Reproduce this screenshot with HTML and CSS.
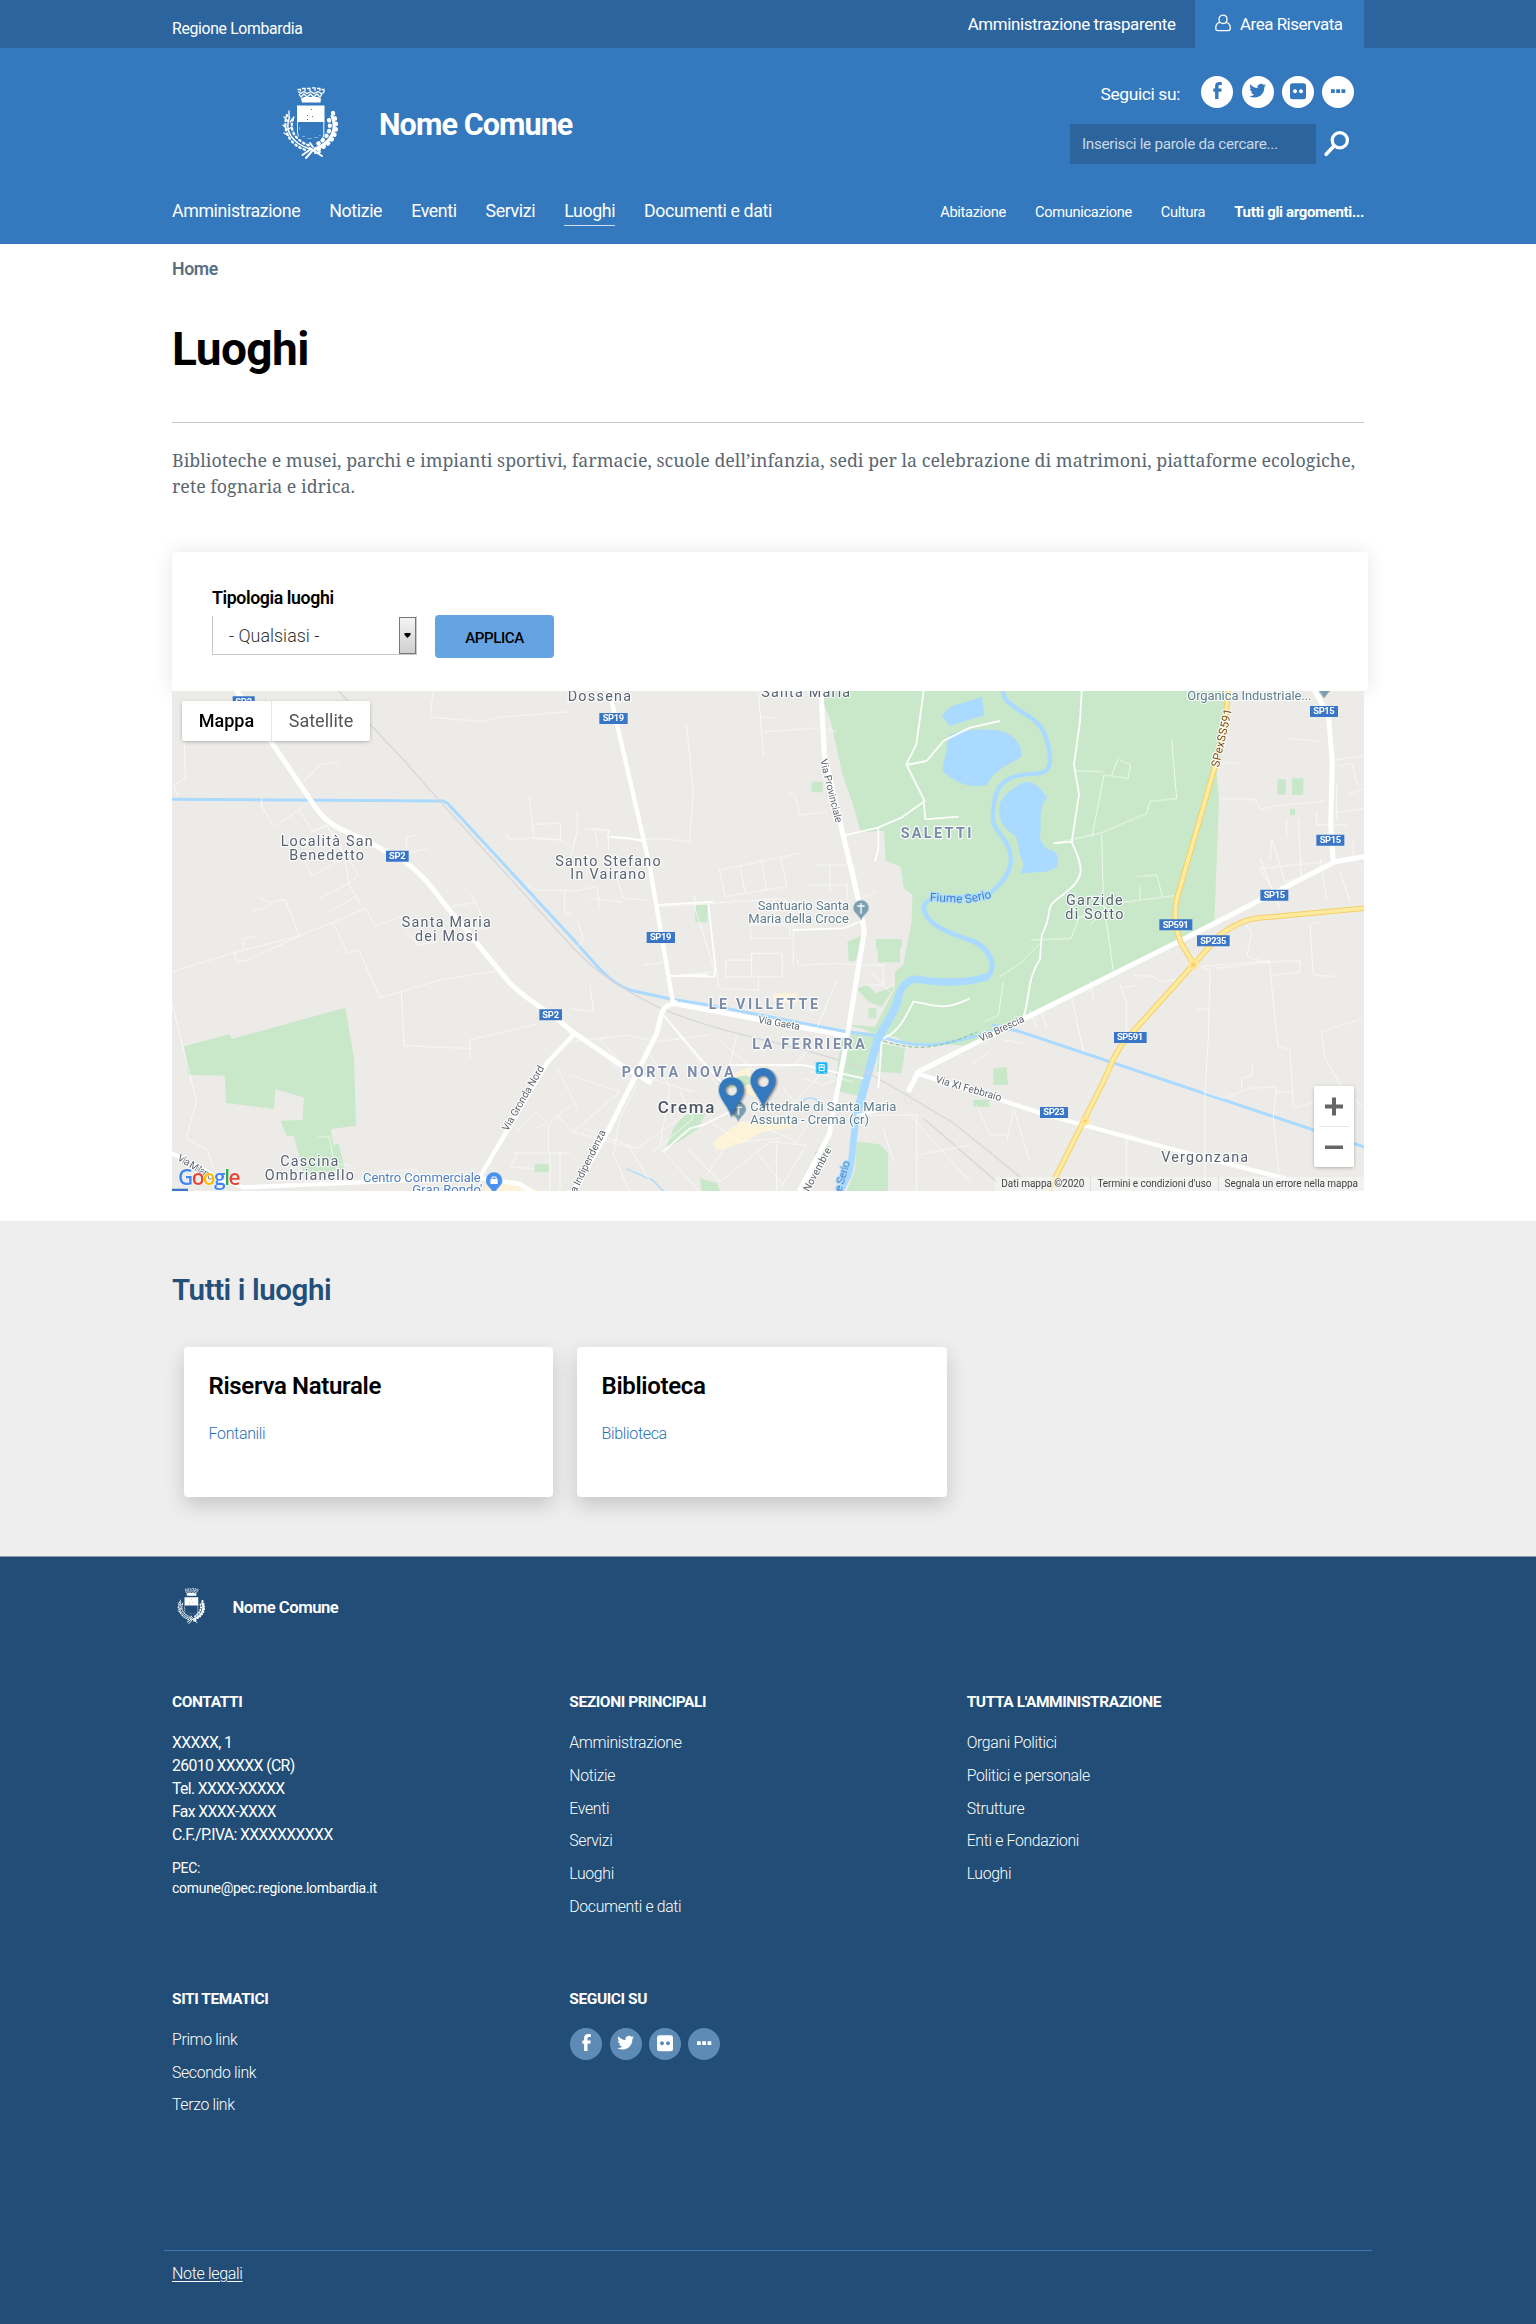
FILE: index.html
```html
<!DOCTYPE html>
<html lang="it">
<head>
<meta charset="utf-8">
<title>Luoghi - Nome Comune</title>
<link rel="stylesheet" href="styles.css">
</head>
<body>
<svg width="0" height="0" class="defs">
  <defs>
    <symbol id="stemma" viewBox="0 0 58 72">
      <g fill="#fff">
        <path d="M19 11.500l3-1.500h14l3 1.500-.5 4H20z"/>
        <path d="M15 18.500h27.500v16.500H15z"/>
        <path d="M41.300 34h1v14l-1.500 4-.5-1 1-3zM15 35h.8v9l1 6-1-1-.8-5z"/>
      </g>
      <path fill="none" stroke="#fff" stroke-width="1.300" d="M15.500 2.500h3v2M20 1.500h3v2.500M25 1.500h3v2.500M30 .8h3v3.200M35 1.500h3v2.500M39.500 2.500h2.500v3M16 4.500l3 2 3-2 3 2 4-2 3 2 4-2 3 2 3-1M17 7l2 3 3-3 3 3 3.500-3 3 3 3.500-3 3 3 2-3"/>
      <g fill="currentColor">
        <path d="M29 22h1v1h-1zM25 28h1v1h-1zM30 29h1v1h-1zM25 32h1v1h-1z"/>
      </g>
      <g fill="none" stroke="#fff" stroke-linecap="round">
        <path stroke-width="1.500" d="M7.500 30C2.500 43 9 56 28 62"/>
        <path stroke-width="2.300" stroke-dasharray="1.500 3.200" d="M5 28C0 43 7 58 25 63.500M11 32C7 43 13 53 27 58.500"/>
        <path stroke-width="1.300" d="M7 24v6M2 30l4 4M12 30l-4 5M1 38l4 4M10 40l-5 3M2 46l5 3"/>
        <path stroke-width="3" d="M50 29C56 43 49 56 33 62"/>
        <path stroke-width="4.200" stroke-dasharray=".5 5" d="M51 26C59 44 51 57 34 63.500M47 33C50 43 45 52 33 58.500"/>
        <path stroke-width="2" d="M29 62l-8.500 6M28 61l12 8M31 63l-7 8M31 60l-3-4M33 66l5-1"/>
      </g>
      <path fill="#fff" opacity=".35" d="M20 49h3v1h-3zM25 51h5v1h-5zM32 50h4v1h-4zM17 40h1v3h-1zM37 48h2v1h-2z"/>
    </symbol>
    <symbol id="ico-fb" viewBox="0 0 32 32"><path fill="currentColor" d="M20.8 6.2v2.900h-1.700c-1.300 0-1.600.6-1.600 1.500v1.900h3.200l-.4 3.200h-2.800v7.300h-3.400v-7.300h-1.800v-3.200h1.800V10c0-2.500 1.600-3.900 4.100-3.900 1.100 0 2.200.1 2.200.1z"/></symbol>
    <symbol id="ico-tw" viewBox="0 0 32 32"><path fill="currentColor" d="M24 9.200c-.6.3-1.200.5-1.900.6.7-.4 1.200-1.100 1.500-1.800-.7.4-1.400.7-2.200.8a3.500 3.500 0 0 0-5.900 3.200c-2.900-.1-5.400-1.500-7.100-3.700-.9 1.600-.4 3.600 1.100 4.600-.6 0-1.100-.2-1.600-.4 0 1.700 1.200 3.100 2.800 3.400-.5.1-1 .2-1.600.1.5 1.400 1.700 2.400 3.200 2.400a6.900 6.900 0 0 1-5.100 1.500 9.800 9.800 0 0 0 15.100-8.700c.7-.5 1.300-1.200 1.700-2z"/></symbol>
    <symbol id="ico-fl" viewBox="0 0 32 32"><path fill="currentColor" fill-rule="evenodd" d="M10.500 7.200h11a2.500 2.500 0 0 1 2.500 2.500v11a2.500 2.500 0 0 1-2.500 2.500h-11A2.500 2.500 0 0 1 8 20.700v-11a2.500 2.500 0 0 1 2.500-2.500zM13 13.200a2 2 0 1 0 .01 0zM19 13.200a2 2 0 1 0 .01 0z"/></symbol>
    <symbol id="ico-more" viewBox="0 0 32 32"><path fill="currentColor" d="M9 13.200h3.800v3.800H9zM14.200 13.200H18v3.800h-3.800zM19.500 13.200h3.800v3.800h-3.800z"/></symbol>
  </defs>
</svg>

<header>
  <div class="topbar">
    <div class="container topbar-row">
      <a class="region">Regione Lombardia</a>
      <div class="topbar-right">
        <a class="trasp">Amministrazione trasparente</a>
        <a class="area">
          <svg width="16" height="18" viewBox="0 0 16 18" fill="none" stroke="#fff" stroke-width="1.300"><path d="M8 1.200c2.700 0 4 2 4 4.300s-1.700 4-4 4-4-1.700-4-4 1.300-4.300 4-4.300zM4.700 8.400C2.300 9 .9 10.700.8 13.200v1.400c0 1.300.7 2 1.900 2h10.600c1.200 0 1.900-.7 1.900-2v-1.400c-.1-2.500-1.500-4.200-3.900-4.800"/></svg>
          <span>Area Riservata</span>
        </a>
      </div>
    </div>
  </div>
  <div class="masthead">
    <div class="container">
      <div class="masthead-row">
        <div class="brand">
          <svg width="58" height="72"><use href="#stemma"/></svg>
          <span class="brand-name">Nome Comune</span>
        </div>
        <div class="tools">
          <div class="follow">
            <span class="follow-label">Seguici su:</span>
            <a class="dot first"><svg width="32" height="32"><use href="#ico-fb"/></svg></a>
            <a class="dot"><svg width="32" height="32"><use href="#ico-tw"/></svg></a>
            <a class="dot"><svg width="32" height="32"><use href="#ico-fl"/></svg></a>
            <a class="dot"><svg width="32" height="32"><use href="#ico-more"/></svg></a>
          </div>
          <div class="search">
            <div class="search-box">Inserisci le parole da cercare...</div>
            <svg width="26" height="26" viewBox="0 0 26 26" fill="none" stroke="#fff"><circle cx="15.800" cy="9.300" r="7.600" stroke-width="3.300"/><path stroke-width="3.600" stroke-linecap="round" d="M10 15l-7.800 8.300"/></svg>
          </div>
        </div>
      </div>
      <nav class="nav">
        <div class="nav-main">
          <a>Amministrazione</a><a>Notizie</a><a>Eventi</a><a>Servizi</a><a class="active">Luoghi</a><a>Documenti e dati</a>
        </div>
        <div class="nav-topics">
          <a>Abitazione</a><a>Comunicazione</a><a>Cultura</a><a class="all">Tutti gli argomenti...</a>
        </div>
      </nav>
    </div>
  </div>
</header>

<main>
  <div class="container">
    <div class="crumb">Home</div>
    <h1>Luoghi</h1>
    <p class="lead">Biblioteche e musei, parchi e impianti sportivi, farmacie, scuole dell’infanzia, sedi per la celebrazione di matrimoni, piattaforme ecologiche,<br>rete fognaria e idrica.</p>
    <div class="filter">
      <div class="filter-label">Tipologia luoghi</div>
      <div class="filter-row">
        <div class="select"><span>- Qualsiasi -</span><i class="select-arrow"><svg width="7" height="5"><path d="M.5 0h6v2l-3 3-3-3z"/></svg></i></div>
        <button class="apply">APPLICA</button>
      </div>
    </div>
    <div class="map">
      <svg class="map-canvas" width="1192" height="500" viewBox="6 18 3576 1500">
        <path fill="#ecebe8" d="M0 0h3600v1530H0z"/>
        <!-- parks -->
        <g fill="#c8e8c9">
          <path d="M42 1084l136-36 8 14 340-94 26 152 6 202-76 10 8 48 16-4 18 76-122 18-30-116-22-2-18-44 66-4 4-66-86-26-4 60-144-18-4-82-110-2zM1094 1438h42v24h-42z"/>
          <g transform="translate(1200)">
            <path d="M755 18H1975l-25 130-13 90 10 100-14 374-735 370-110-5-88-5-20-15-80-15-20-10-40-10-20-5 95 8 60-115 0-50 25-20 25-130 2-80-25-20-10-65-45-18-5-90-70 5-25-90-30-85-35-160-20-50z"/>
            <path d="M725 290h33v32h-33zM376 660h36v52h-36zM832 770l45-20-20 78-20 2zM918 762h78v25h-6v45h-66v-40h-6zM860 910l35-10 20 25 60-20-40 60-40-15zM895 970h24v30h-24zM818 1035l95 10 5 10-45 180-80-20zM930 1075l75 15-10 75-75-5zM290 1385l20-55 35-42 62-2-22 44-35 25-50 30zM735 1400l45-20-15 40-32 15zM860 1370l70 8 24 25v115H830l25-60zM390 1480l50 15 10 23h-55z"/>
          </g>
          <g transform="translate(2400)">
            <path d="M922 283h26v46h-26zM966 280h34v50h-34zM960 372h15v18h-15zM70 1150l40-4 4 54h-44zM10 1244h47v22H10z"/>
          </g>
        </g>
        <!-- built-up blocks -->
        <g fill="#fdf3d8">
          <path d="M1680 1170l60-25v40l20 50-50-15zM1810 925l70 0v30l-70-8zM950 1490h90l70 28h-170z"/>
          <path d="M1630 1370l80-60 160-5-10 25-80 10-65 35-75 22z"/>
        </g>
        <path fill="#c8e8c9" d="M1640 1190l90-20 30 25-80 15z"/>
        <!-- water -->
        <g fill="none" stroke="#aadaff" stroke-linejoin="round" stroke-linecap="round">
          <path stroke-width="9" d="M0 343l820 5 14 8L1205 758l70 78c40 44 70 70 120 83l110 24 110 17 415 80 60 8 60 12c110 34 170 25 350-32"/>
          <path stroke-width="9" d="M2470 1020l80 20 1060 355"/>
          <path stroke-width="13" d="M2500 10C2488 70 2600 80 2625 150S2645 262 2605 265 2490 265 2475 340 2470 420 2500 460 2540 560 2465 620C2400 650 2265 620 2262 665S2320 740 2400 765"/>
          <path stroke-width="16" d="M2400 765C2460 785 2485 850 2450 875"/>
          <path stroke-width="22" d="M2450 875C2400 895 2300 895 2240 882 2195 885 2185 930 2180 955"/>
          <path stroke-width="25" d="M2182 950C2160 1010 2130 1040 2120 1075L2090 1180 2060 1290"/>
          <path stroke-width="20" d="M2060 1290C2045 1380 2050 1430 2035 1470L2005 1530"/>
          <path stroke-width="4" d="M1370 1452l80 35 30 31M1900 1250c10-20 50-10 40 5"/>
        </g>
        <g fill="#aadaff">
          <path d="M2315 90l30-26 90-28 8 55-60 18-44 14zM2340 150C2380 130 2470 130 2500 140 2530 150 2560 180 2554 215 2520 240 2475 250 2450 300 2400 310 2360 295 2320 260 2315 230 2335 200 2330 175z"/>
          <path d="M2560 292c40-5 50 20 72 45-25 30-20 60-20 90-5 40 0 45 24 68 20-5 35 20 24 50-30 25-60 10-107 22l8-30c-20-40-10-50-25-85-30-20-40-30-47-60-15-50 35-80 71-100z"/>
        </g>
        <!-- railway -->
        <g fill="none" stroke="#d7d7d9" stroke-width="4">
          <path d="M500 12l200 212 110 125 400 440c80 85 160 130 250 175 200 90 420 110 600 180l140 80 150 90 260 210"/>
          <path d="M2260 1300l220 190"/>
        </g>
        <!-- minor roads -->
        <g fill="none" stroke="#fff" stroke-width="2.600" opacity=".8">
          <path d="M43 170l3 110-36 20 12 34M397 290l32-25 5-12 20-14 52-8M275 338v25l38 65 18-14 80-56M388 375l40 65 42-20 54 90 12 88 38 62M430 440l40-20 96 150-28 24-88 44M390 500l35 72 120-65M480 680l74-44M244 678l50-12 10-12-36-16M304 652l42-8 42 108M0 862l194-60 194-50 100-40 98-42 30 54 80-32M194 802l6 28 30-4 160-74M220 790v-28l40-8M488 712l44 90 34-6 64 142 64-18 112-34 180-30M694 922l8 160 200 8M900 1120v-56l200-46M0 930l30 120 50 200-32 110 66 36 14 50M790 20l-10 76 160 14 50-14 210-16M845 664l72-12-14-26M917 652l35 80-80-10M705 735l40 45 60-12M1078 338l14 122 80 4v-50l-80 4M1006 442l10 20 76-2 80 4 30 22M710 455l30-6M710 455v50l62-16M1070 598l30 18 100 0M1184 616v70h20M1040 1340l60-60 32 32-38 20M1162 1150l60 120"/>
          <path d="M1135 1400v-80l40-40 30-18M1030 1404h170M1160 1290l60 60M1140 1404v110M1170 1404v110M1042 1404l-20 40 70 8M440 1358l38-4 14 80 60 10M620 1460l120-6 20 40"/>
          <g transform="translate(1200)">
            <path d="M350 120l20 200-10 130v20l-100-10-60 5-90-8 10-20-75-5M565 20l16 195M570 95l50 5M585 140l170-12M760 130l40 10M650 322l25 8 15 60 80-10M22 380v60l-22 80M65 430l50 5v60M75 440l10 50M448 555l240-50M448 555l18 80 180-30M510 540l15 80M575 525l15 90M632 515l18 90M260 665l380-25 20 20M375 630v40l60 190M330 870l110-10 5 50 120 5v-40M467 825v50h170v-70h-92v20h-78M545 805v75M680 820l5 20 115-5 60 5M670 640v200M800 890l-60 140M740 540h110M712 600h120v40M780 540v80M850 540l20 100 50-20M540 720h120v40H545zM60 900l10 80-70-10M60 640l100 10M0 620l80-15 10 60M20 700l20 60-20 30M130 540l30 100 80 5M220 840l80-10"/>
            <path d="M280 990l110 140 50 70M0 1070l170-20 90 20 160-20M230 1090l70 120-30 170M120 1130l80 70-50 100-20 110 50 110M90 1060l80 100 200 60M0 1170l150 50-140 120 180 50M40 1330l160 60 160-110 80-20M330 1220l40 80-120 100M270 1390l120 130M180 1390l60 100M350 1390l100 100 150-120 110 10-80 130M620 1380v140M560 1400l80 100M590 1330l90 40 40-60 60 10M440 1060l120 100 110-20 60-60M500 1050l-30 130M640 1210l50 60M700 1180l60 20 50-20M720 1160l130 30M640 1290l110-120M860 1290h180v230M1020 1290l180 200M940 1330l30 100M1040 1410l160-30M900 860l60 60M860 840h80v60h-50M420 1310l90 60 120-10M470 1380l-60 90"/>
          </g>
          <g transform="translate(2400)">
            <path d="M605 165l15 175-80 10-10 35-140 60-140 30M445 220l-20 50M450 225l32 15-8 40-72-10-36 185M310 257l90 3M395 450l5 200 18 120 12 90M183 765l120-5 20-50-10-40M460 652l155-20M500 575l60-5 18 65M510 600v45M320 700l80-20-40 40M90 875l60-40 60-60M450 910l50-10M450 895l20 60v120M305 935l35 165M360 885l10 60M490 870l60 5 20 15 80-8M700 850l20 5-5 200-10 160v300M745 340l110 3 15 30 45-10 150-15M745 235h60M960 160l90 10M1100 300v100M905 465l-5 60M870 520l60 150M905 460l40 130 80-20M950 400v60M985 400l10 190M1040 380v40h90M1150 460v60l30 30M1110 560l30 90M1050 520l20 120M930 650l-60-100 200-20M1095 225l85-12M1090 385l92-15M1105 245l40-10 20 70M1130 330l52-20M830 720l15 25-15 70 70 20 5 70 20 180 35 10 10 170M900 830l90-2v35l-85 8M690 845l210-18M1055 710l-35 10 10 150 70 5M1180 1000l-125 40 10 80 40 70 75 80M700 1220l60 20 80-30 80-5-10 90 20 200M815 1210v-30l32-10v-30M920 1220h45M970 1270l70-20M680 973h38M740 850l160-20M470 1350v130M180 975l20 50M210 970l20 60M100 890l-15 100-40 20M160 1075l-60-10M0 1140l60-40M20 1260l40 90h50M130 1270l50 160M130 1280l-20 90"/>
          </g>
        </g>
        <g fill="none" stroke="#fff" stroke-width="5.500" stroke-linejoin="round" opacity=".95">
          <path d="M2261 18l-22 160-30 60 55 110-70 50-70 30-102 23M2261 348l5 55 100-8M2210 240l60-12 50-60 80-40 90-20M2125 430v60l-10 40M2735 18l-5 90-18 130 15 90-22 144M2705 472c40 80 40 110-30 160-60 40-20 40-60 120l-5 70c-40 60-30 120-50 175M2650 475l60-5M1460 660l170-10M1615 655l22 200-5 20-130-2 110-4M1870 735l150-5 50-20M1320 455l60 5 40 8"/>
          <path d="M1680 1140l220 0 180 40M1480 1400l80-70 40-10 100-50M1480 990l110 130 80 90M2060 1290l60-10M2140 1060c50-20 70-70 90-110 70 10 90 30 170-10M2135 1070l-10 140"/>
        </g>
        <!-- main roads -->
        <g fill="none" stroke="#fff" stroke-linejoin="round">
          <path stroke-width="15" d="M195 10l108 160 122 180c50 80 90 80 160 115l120 65c70 50 100 110 150 165l165 200c60 60 110 75 180 140l145 100 100 60"/>
          <path stroke-width="13" d="M1318 18l120 520 70 410 10 5"/>
          <path stroke-width="15" d="M2025 1052l-510-96c-40 0-40 30-55 90l-140 280-130 230"/>
          <path stroke-width="13" d="M1210 1050l-80 85-200 340M0 1402l150 80 70 25 700-30 130 20 60 40"/>
          <path stroke-width="15" d="M1953 18l10 190 105 450 15 80-60 370-35 180-10 60-90 170"/>
          <path stroke-width="15" d="M2215 1220l30-60 160-80 160-80 490-245 440-225 100-18M3430 10l45 80 12 140-5 190 8 110"/>
          <path stroke-width="13" d="M2240 1165l160 50 230 75 330 90 420 110"/>
          <circle cx="2216" cy="1240" r="14" stroke="#d7d7d9"/>
        </g>
        <g fill="none" stroke-linejoin="round">
          <path stroke="#f4cf66" stroke-width="17" d="M3176 10l-10 90-30 140-115 400c-10 40-5 90 10 130l40 68-180 200c-60 60-70 110-90 150l-135 270-30 60M3071 838l80-90c60-40 90-50 150-52l300-28"/>
          <path stroke="#ffeb9f" stroke-width="11" d="M3176 10l-10 90-30 140-115 400c-10 40-5 90 10 130l40 68-180 200c-60 60-70 110-90 150l-135 270-30 60M3071 838l80-90c60-40 90-50 150-52l300-28"/>
          <circle cx="3070" cy="839" r="11" stroke="#ffe691" stroke-width="9" fill="#f4cf66"/>
          <circle cx="2745" cy="1308" r="9" stroke="#ffe691" stroke-width="9" fill="#f4cf66"/>
          <path stroke="#7cc08a" stroke-width="3" stroke-dasharray="12 7" d="M2140 1068c110 34 170 20 280-26"/>
        </g>
        <!-- road shields -->
        <path fill="#3a76c8" d="M188 34h66v33h-66zM648 497h68v33h-68zM1108 973h68v33h-68zM1288 84h85v33h-85zM1430 741h85v33h-85zM3420 63h84v33h-84zM3439 449h84v33h-84zM3271 614h84v33h-84zM2968 703h99v33h-99zM3081 751h98v33h-98zM2832 1041h98v33h-98zM2610 1266h84v33h-84zM0 1511h54v20H0z"/>
        <g class="shield">
          <text x="221" y="59" textLength="50">SP2</text><text x="682" y="522" textLength="50">SP2</text><text x="1142" y="998" textLength="50">SP2</text>
          <text x="1330" y="109" textLength="64">SP19</text><text x="1472" y="766" textLength="64">SP19</text>
          <text x="3462" y="88" textLength="64">SP15</text><text x="3481" y="474" textLength="64">SP15</text><text x="3313" y="639" textLength="64">SP15</text>
          <text x="3017" y="728" textLength="78">SP591</text><text x="3130" y="777" textLength="78">SP235</text><text x="2880" y="1066" textLength="78">SP591</text><text x="2652" y="1291" textLength="64">SP23</text>
        </g>
        <!-- place names -->
        <g class="place">
          <text x="470" y="483" textLength="276">Località San</text><text x="470" y="525" textLength="224">Benedetto</text>
          <text x="829" y="726" textLength="267">Santa Maria</text><text x="829" y="768" textLength="188">dei Mosi</text>
          <text x="418" y="1443" textLength="174">Cascina</text><text x="418" y="1485" textLength="267">Ombrianello</text>
          <text x="1288" y="49" textLength="190">Dossena</text><text x="1907" y="36" textLength="267">Santa Maria</text>
          <text x="1314" y="542" textLength="316">Santo Stefano</text><text x="1314" y="583" textLength="226">In Vairano</text>
          <text x="2773" y="660" textLength="170">Garzide</text><text x="2773" y="702" textLength="174">di Sotto</text>
          <text x="3104" y="1430" textLength="261">Vergonzana</text>
        </g>
        <g class="place district">
          <text x="2298" y="460" textLength="212">SALETTI</text><text x="1780" y="973" textLength="328">LE VILLETTE</text>
          <text x="1916" y="1093" textLength="338">LA FERRIERA</text><text x="1523" y="1177" textLength="336">PORTA NOVA</text>
        </g>
        <text class="place city" x="1548" y="1284" textLength="170">Crema</text>
        <g class="poi">
          <text x="2037" y="675" text-anchor="end" textLength="274">Santuario Santa</text><text x="2037" y="713" text-anchor="end" textLength="302">Maria della Croce</text>
          <text x="1741" y="1279" textLength="438">Cattedrale di Santa Maria</text><text x="1741" y="1318" textLength="356">Assunta - Crema (cr)</text>
          <text x="3052" y="46" textLength="372">Organica Industriale...</text>
          <g fill="#4d7fc4"><text x="579" y="1490" textLength="353">Centro Commerciale</text><text x="727" y="1526" textLength="210">Gran Rondo'</text></g>
        </g>
        <g class="road">
          <text transform="translate(1013 1340) rotate(-60)" textLength="220">Via Gronda Nord</text>
          <text transform="translate(20 1424) rotate(31)" textLength="122">Via Milano</text>
          <text transform="translate(1950 225) rotate(76)" textLength="195">Via Provinciale</text>
          <text transform="translate(1763 1013) rotate(10)" textLength="127">Via Gaeta</text>
          <text transform="translate(2295 1192) rotate(16)" textLength="204">Via XI Febbraio</text>
          <text transform="translate(2433 1071) rotate(-25)" textLength="146">Via Brescia</text>
          <text transform="translate(1206 1549) rotate(-64)" textLength="232">Via Indipendenza</text>
          <text transform="translate(1900 1554) rotate(-62)" textLength="180">IV Novembre</text>
          <text class="yellow" transform="translate(3146 248) rotate(-77)" textLength="178">SPexSS591</text>
          <g class="river"><text transform="translate(2279 648) rotate(3)" textLength="98">Fiume</text><text transform="translate(2387 655) rotate(-12)" textLength="80">Serio</text><text transform="translate(1996 1590) rotate(-74)" textLength="165">Fiume Serio</text></g>
        </g>
        <!-- points of interest -->
        <path fill="#7b9fb0" d="M2073 646a23 23 0 0 1 23 23c0 14-17 20-23 38-6-18-23-24-23-38a23 23 0 0 1 23-23zM1705 1250a23 23 0 0 1 23 23c0 14-17 20-23 38-6-18-23-24-23-38a23 23 0 0 1 23-23zM3447 18h32l-17 22z"/>
        <path fill="none" stroke="#fff" stroke-width="4" d="M2073 654v32M2062 663h22M1705 1258v32M1695 1267h20"/>
        <path fill="#4a90f0" d="M972 1462a25 25 0 0 1 25 25c0 15-18 22-25 40-7-18-25-25-25-40a25 25 0 0 1 25-25z"/>
        <path fill="#fff" d="M961 1482h22v15h-22z"/><path fill="none" stroke="#fff" stroke-width="3" d="M966 1482v-6h12v6"/>
        <rect x="1938" y="1132" width="34" height="34" rx="4" fill="#13b5f4"/>
        <path fill="none" stroke="#fff" stroke-width="3" d="M1947 1139h16v18h-16zM1947 1148h16M1955 1139v9M1947 1161l-2 3M1963 1161l2 3"/>
        <!-- location pins -->
        <g class="pin" fill="#3478bd" fill-rule="evenodd">
          <path d="M1684 1177a38 38 0 0 1 38 38c0 26-28 46-38 82-10-36-38-56-38-82a38 38 0 0 1 38-38zM1684 1198a17 17 0 1 0 .1 0z"/>
          <path d="M1779 1149a38 38 0 0 1 38 38c0 26-28 46-38 82-10-36-38-56-38-82a38 38 0 0 1 38-38zM1779 1172a17 17 0 1 0 .1 0z"/>
        </g>
      </svg>
      <div class="map-type"><span class="on">Mappa</span><span>Satellite</span></div>
      <div class="map-zoom"><svg width="40" height="81" viewBox="0 0 40 81"><path fill="#666" d="M11 18.500h7v-7h4v7h7v4h-7v7h-4v-7h-7zM11 59.500h18v3.600H11z"/><path fill="#e6e6e6" d="M5 40h30v1H5z"/></svg></div>
      <div class="map-logo"><span class="g1">G</span><span class="g2">o</span><span class="g3">o</span><span class="g1">g</span><span class="g4">l</span><span class="g2">e</span></div>
      <div class="map-legal"><span>Dati mappa ©2020</span><span>Termini e condizioni d'uso</span><span>Segnala un errore nella mappa</span></div>
    </div>
  </div>
</main>

<section class="places">
  <div class="container">
    <h2>Tutti i luoghi</h2>
    <div class="cards">
      <article class="card"><h3>Riserva Naturale</h3><a>Fontanili</a></article>
      <article class="card"><h3>Biblioteca</h3><a>Biblioteca</a></article>
    </div>
  </div>
</section>

<footer>
  <div class="container">
    <div class="foot-brand"><svg width="29" height="36"><use href="#stemma"/></svg><span>Nome Comune</span></div>
    <div class="foot-grid">
      <div>
        <h4>CONTATTI</h4>
        <p class="address">XXXXX, 1<br>26010 XXXXX (CR)<br>Tel. XXXX-XXXXX<br>Fax XXXX-XXXX<br>C.F./P.IVA: XXXXXXXXXX</p>
        <p class="pec">PEC:<br>comune@pec.regione.lombardia.it</p>
      </div>
      <div>
        <h4>SEZIONI PRINCIPALI</h4>
        <ul><li>Amministrazione</li><li>Notizie</li><li>Eventi</li><li>Servizi</li><li>Luoghi</li><li>Documenti e dati</li></ul>
      </div>
      <div>
        <h4>TUTTA L'AMMINISTRAZIONE</h4>
        <ul><li>Organi Politici</li><li>Politici e personale</li><li>Strutture</li><li>Enti e Fondazioni</li><li>Luoghi</li></ul>
      </div>
      <div>
        <h4>SITI TEMATICI</h4>
        <ul><li>Primo link</li><li>Secondo link</li><li>Terzo link</li></ul>
      </div>
      <div>
        <h4>SEGUICI SU</h4>
        <div class="foot-social">
          <a class="dot"><svg width="32" height="32"><use href="#ico-fb"/></svg></a>
          <a class="dot"><svg width="32" height="32"><use href="#ico-tw"/></svg></a>
          <a class="dot"><svg width="32" height="32"><use href="#ico-fl"/></svg></a>
          <a class="dot"><svg width="32" height="32"><use href="#ico-more"/></svg></a>
        </div>
      </div>
    </div>
    <div class="foot-end"><a>Note legali</a></div>
  </div>
</footer>
</body>
</html>
```
FILE: styles.css
```css
* { box-sizing: border-box; letter-spacing: -.021em; }
body { margin: 0; font-family: Roboto, "Liberation Sans", sans-serif; color: #000; background: #fff; }
h1, h2, h3, h4, p, ul { margin: 0; padding: 0; }
ul { list-style: none; }
svg { display: block; flex: none; }
a, span, li { white-space: nowrap; }
.defs { position: absolute; }
.container { width: 1192px; margin: 0 auto; }

.topbar { height: 48px; background: #2c649e; color: #fff; }
.topbar-row { display: flex; justify-content: space-between; height: 48px; }
.region { padding-top: 9px; font-size: 15.8px; line-height: 39px; }
.topbar-right { display: flex; font-size: 16.9px; line-height: 46px; }
.trasp { padding: 1px 19.500px 0 0; }
.area { display: flex; width: 169px; padding: 1px 0 0 20px; background: #3478bd; }
.area span { letter-spacing: -.027em; }
.area svg { margin: 13px 9px 0 0; }

.masthead { height: 196px; background: #3478bd; color: #fff; }
.masthead-row { display: flex; justify-content: space-between; height: 150px; padding-top: 28px; }
.brand { display: flex; align-items: flex-start; padding: 11px 0 0 110px; color: #3478bd; }
.brand-name { margin: 18px 0 0 39px; color: #fff; font-size: 30.5px; font-weight: 700; line-height: 40px; letter-spacing: -.03em; }
.follow { display: flex; gap: 8px; justify-content: flex-end; padding-right: 10px; }
.follow-label { padding-top: 2px; margin-right: 13px; font-size: 17.4px; line-height: 32px; }
.dot { display: block; width: 32px; height: 32px; border-radius: 50%; background: #fff; color: #3478bd; }
.first { margin-right: 1px; }
.search { display: flex; gap: 8px; justify-content: flex-end; padding: 15px 14px 0 0; }
.search-box { width: 246px; height: 40px; padding-left: 12px; background: #2c649e; color: #c9d8e7; font-size: 15.3px; line-height: 41px; white-space: nowrap; }
.search { margin-top: -1px; }
.search svg { margin-top: 7px; }
.nav { display: flex; justify-content: space-between; }
.nav-main { display: flex; gap: 29px; font-size: 17.75px; line-height: 26px; }
.active { border-bottom: 1px solid #cfe0f0; }
.nav-topics { display: flex; gap: 29px; font-size: 14.6px; line-height: 28px; }
.all { font-size: 14.950px; font-weight: 700; }

.crumb { padding-top: 12px; color: #5a6f82; font-size: 17.7px; font-weight: 600; line-height: 26px; }
h1 { padding: 39px 0 45px; border-bottom: 1px solid #c8c8c8; font-size: 46px; font-weight: 700; line-height: 56px; letter-spacing: -.013em; }
.lead { margin-top: 24px; color: #5a6772; font: 17.800px/26px "Noto Serif", "Liberation Serif", serif; letter-spacing: 0; white-space: nowrap; }
.filter { width: 1196px; height: 139px; margin-top: 53px; padding: 34px 0 0 40px; border-radius: 4px; background: #fff; box-shadow: 0 0 20px rgba(0, 0, 0, .1); }
.filter-label { font-size: 17.7px; font-weight: 600; line-height: 24px; }
.filter-row { display: flex; gap: 18px; padding-top: 5px; }
.select { display: flex; justify-content: space-between; width: 205px; height: 39px; margin-top: 1px; padding-left: 16px; border: 1px solid #c8c8c8; border-top: 0; color: #555; font-size: 17.900px; font-weight: 300; line-height: 40px; }
.select span { letter-spacing: 0; color: #333; }
.select-arrow { display: flex; align-items: center; justify-content: center; width: 17px; height: 37px; margin-top: 1px; border: 1px solid #777; background: linear-gradient(#f4f4f4, #cfcfcf); }
.apply { width: 119px; height: 43px; padding: 3px 0 0; border: 0; border-radius: 4px; background: #65a3e3; font: 500 15.1px Roboto, sans-serif; letter-spacing: -.03em; color: #000; }

.map { position: relative; height: 500px; overflow: hidden; }
.map *, .map-canvas text { letter-spacing: 0; }
.map-canvas text { font-family: Roboto, sans-serif; stroke: #fff; stroke-width: 7px; stroke-linejoin: round; paint-order: stroke; stroke-opacity: .85; }
.place text, text.place { fill: #596273; font-size: 43px; text-anchor: middle; }
.district text { fill: #7b8ba8; font-weight: 700; font-size: 43px; }
.map-canvas text.city { font-size: 51px; font-weight: 500; fill: #4d5562; }
.poi text { font-size: 39px; }
.poi > text { fill: #5f7d8d; }
.road text { fill: #5d646c; font-size: 31px; }
.road .yellow { fill: #7a4a12; font-size: 34px; }
.road .river text { fill: #3f7fc9; stroke: #aadaff; font-size: 35px; }
.map-canvas .shield text { fill: #fff; stroke: none; font-size: 28px; font-weight: 700; text-anchor: middle; }
.pin { filter: drop-shadow(4px 3px 3px rgba(0, 0, 0, .45)); }
.map-type { position: absolute; left: 10px; top: 10px; display: flex; height: 40px; border-radius: 2px; background: #fff; box-shadow: 0 1px 4px -1px rgba(0, 0, 0, .4); color: #565656; font-size: 18px; line-height: 40px; }
.map-type span { width: 98px; text-align: center; }
.map-type .on { width: 90px; border-right: 1px solid #e6e6e6; color: #000; font-weight: 500; }
.map-zoom { position: absolute; right: 10px; bottom: 24px; border-radius: 2px; background: #fff; box-shadow: 0 1px 4px -1px rgba(0, 0, 0, .4); }
.map-logo { position: absolute; left: 6px; bottom: 0; font: 600 21px/28px "Open Sans", sans-serif; text-shadow: 0 0 2px #fff, 0 0 1px #fff; }
.map-logo span { letter-spacing: -1.6px; }
.g1 { color: #4285f4; } .g2 { color: #ea4335; } .g3 { color: #fbbc05; } .g4 { color: #34a853; }
.map-legal { position: absolute; right: 0; bottom: 0; display: flex; height: 14px; background: rgba(245, 245, 245, .7); color: #444; font-size: 10px; line-height: 13px; }
.map-legal span { padding: 0 6px; letter-spacing: -.05px; }
.map-legal span + span { border-left: 1px solid #dcdcdc; }

.places { height: 335px; margin-top: 30px; padding-top: 49px; background: #eee; }
h2 { color: #224f7c; font-size: 29.5px; font-weight: 600; line-height: 40px; letter-spacing: -.014em; }
.cards { display: grid; grid-template-columns: 369px 370px; gap: 24px; padding: 37px 0 0 12px; }
.card { height: 150px; padding: 24px 24.500px; border-radius: 4px; background: #fff; box-shadow: 0 8px 20px rgba(0, 0, 0, .17); }
h3 { font-size: 24px; font-weight: 600; line-height: 30px; letter-spacing: -.014em; }
.card a { display: block; margin-top: 21px; color: #2b6fb5; font-size: 16px; font-weight: 300; line-height: 24px; }

footer { height: 768px; padding-top: 31px; border-top: 1px solid #8e98a6; background: #214d77; color: #fff; }
.foot-brand { display: flex; padding-left: 5px; color: #214d77; }
.foot-brand span { margin: 8px 0 -1px 26.500px; color: #fff; font-size: 16.7px; font-weight: 600; line-height: 24px; letter-spacing: -.03em; }
.foot-grid { display: grid; grid-template-columns: repeat(3, 1fr); row-gap: 63px; padding-top: 66px; font-size: 15.8px; font-weight: 300; }
h4 { font-size: 15.5px; font-weight: 700; line-height: 24px; letter-spacing: -.027em; }
.foot-grid ul { padding-top: 13px; }
.foot-grid li { line-height: 32.800px; }
.address { padding-top: 18px; line-height: 22.900px; font-weight: 400; letter-spacing: -.04em; }
.pec { padding-top: 11px; font-size: 14px; font-weight: 400; line-height: 20px; }
.foot-social { display: flex; gap: 7.300px; padding: 17px 0 0 1px; }
.foot-social .dot { background: #5e8ab6; color: #fff; }
.foot-end { margin: 128px -8px 0; padding: 11px 8px 0; border-top: 1px solid #3d77b5; font-size: 16px; font-weight: 300; line-height: 24px; }
.foot-end a { text-decoration: underline; text-underline-offset: 2px; }
```
